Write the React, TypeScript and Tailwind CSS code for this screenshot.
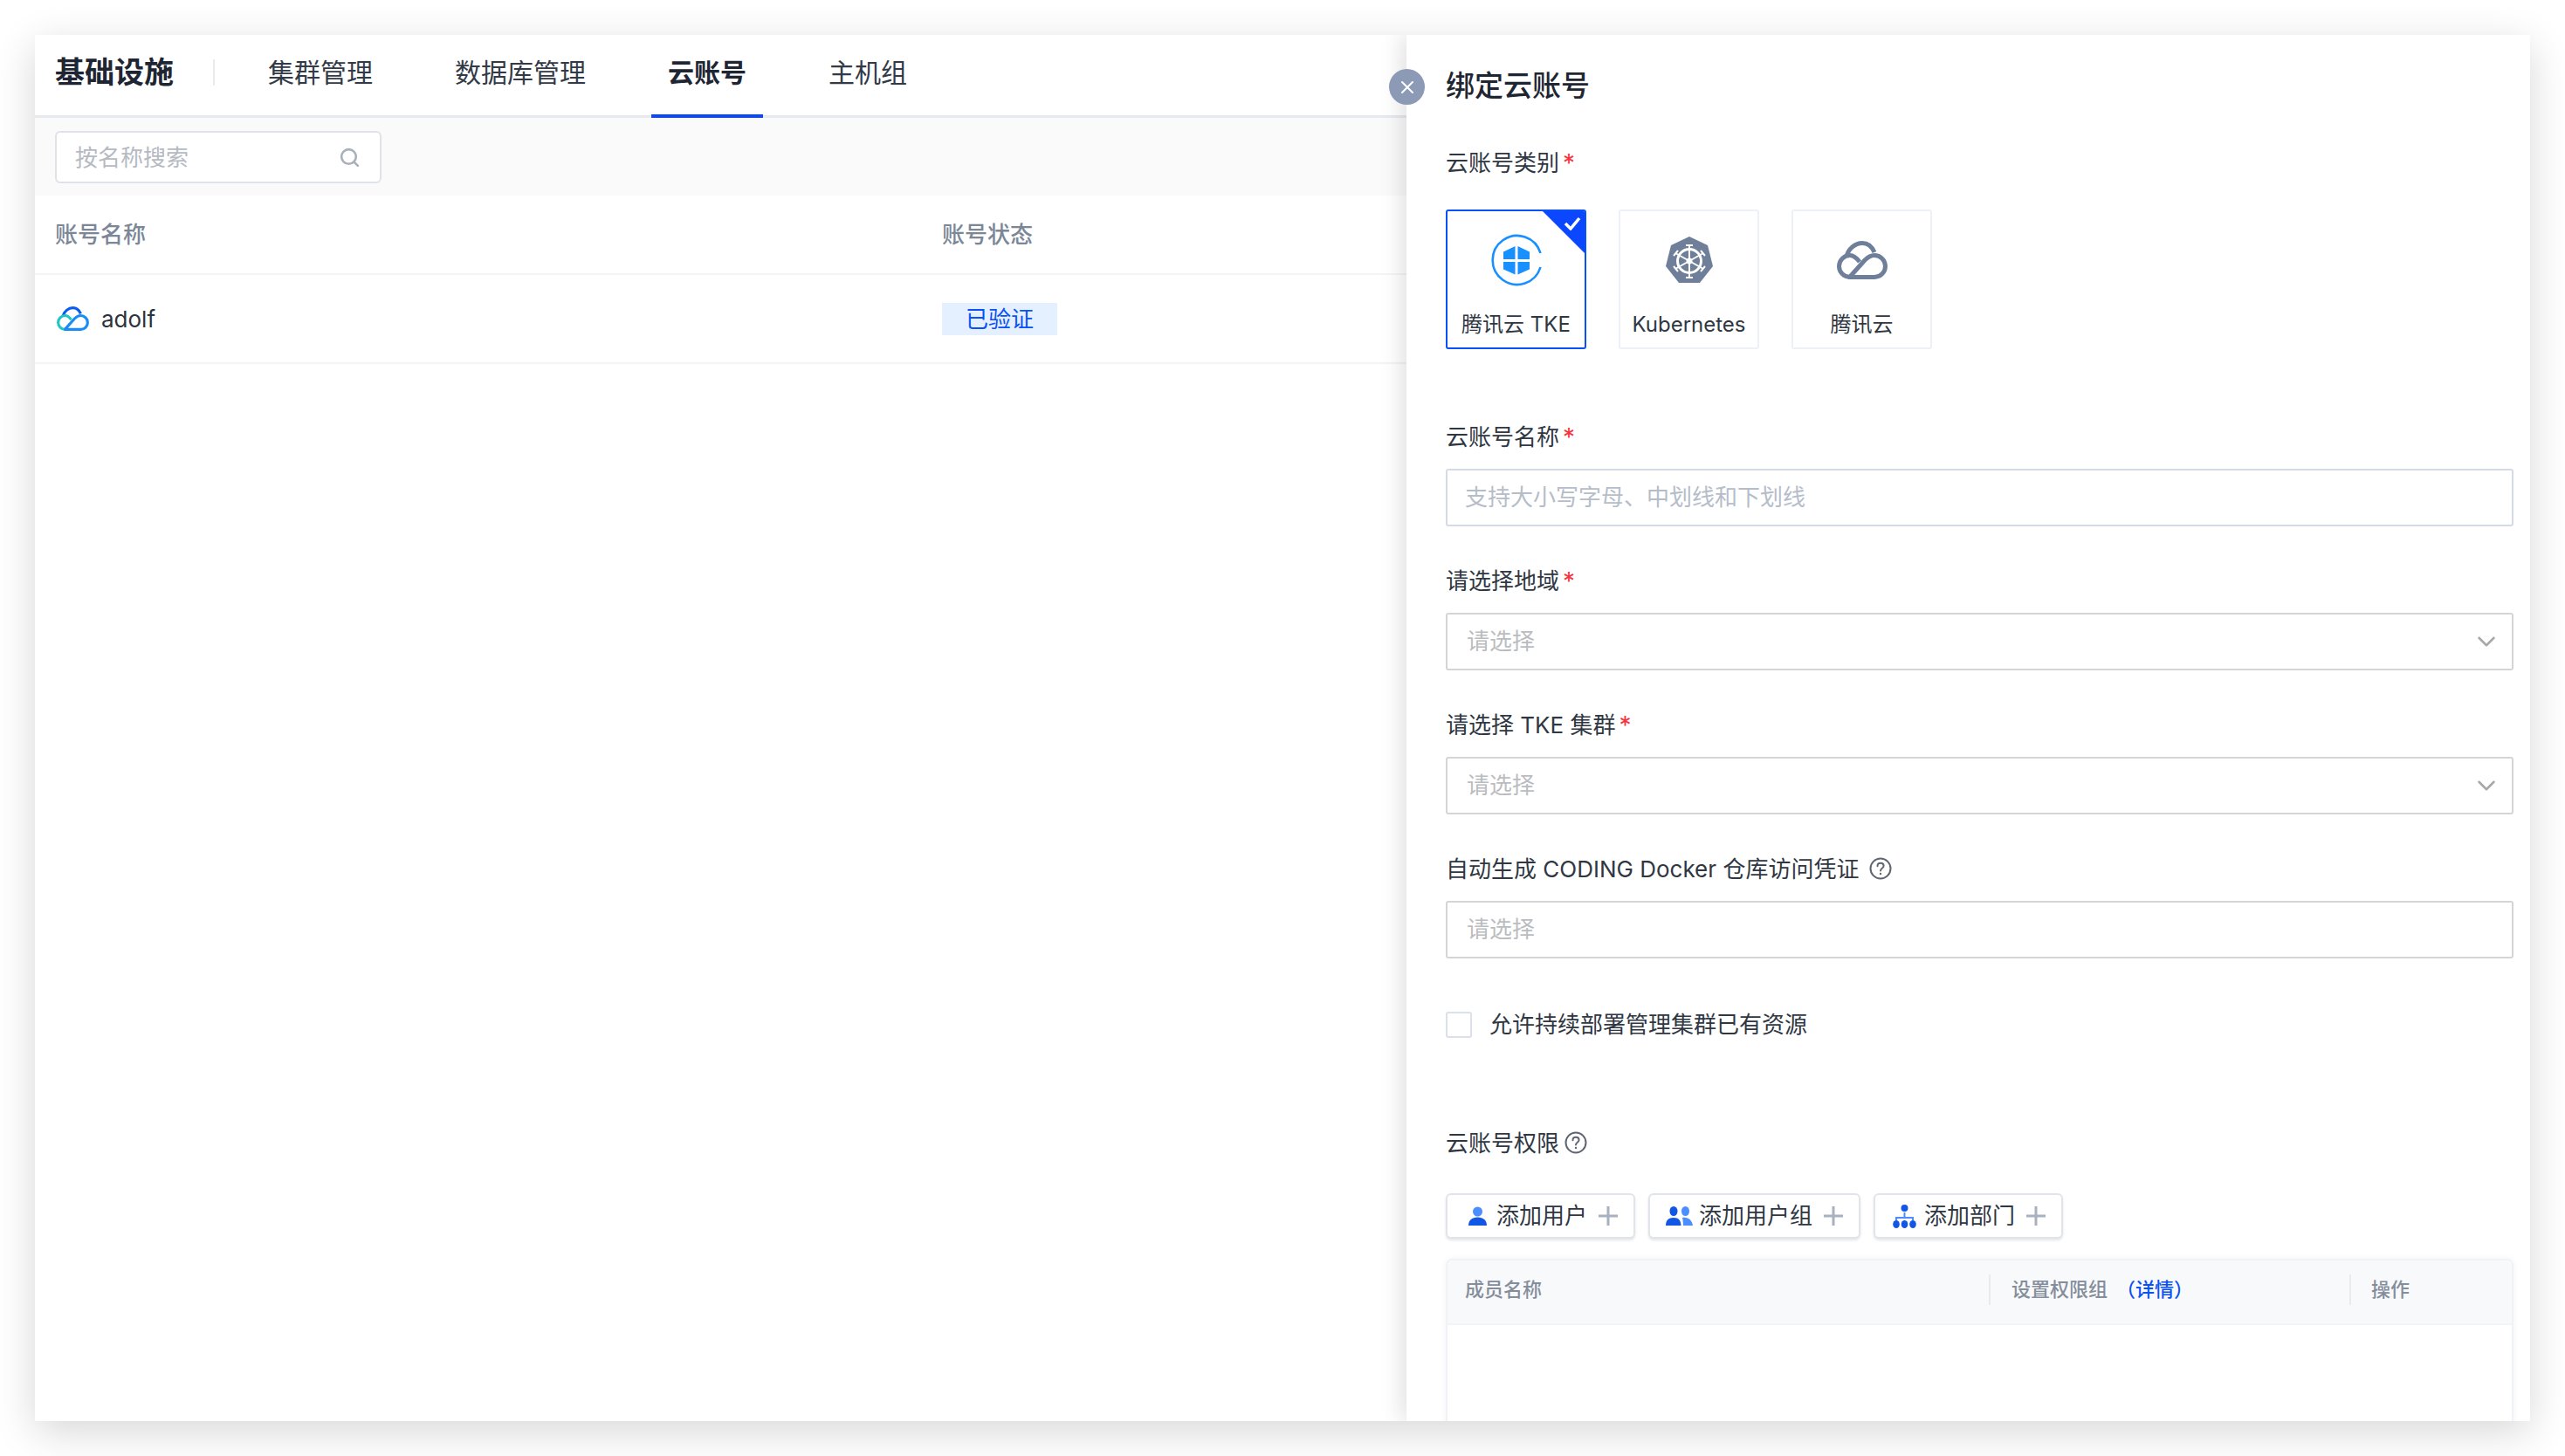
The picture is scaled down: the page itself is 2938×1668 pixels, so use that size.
import { ChevronDown, Search, X } from "lucide-react";

const FONT = "[font-family:Inter,'Noto_Sans_CJK_SC',sans-serif]";

const Help = ({ size = 26 }: { size?: number }) => (
  <svg width={size} height={size} viewBox="0 0 26 26" fill="none" stroke="#5f6672" strokeWidth="2">
    <circle cx="13" cy="13" r="11.5" />
    <path d="M9.5 10.2c0-2 1.6-3.4 3.6-3.4s3.5 1.3 3.5 3.2c0 2.7-3.6 2.7-3.6 5.4" strokeLinecap="round" />
    <circle cx="13" cy="19" r="1.2" fill="#5f6672" stroke="none" />
  </svg>
);

const CloudIcon = ({ a, b, c }: { a: string; b: string; c: string }) => (
  <svg viewBox="0 0 58 44" width="100%" height="100%" fill="none" strokeWidth="5">
    <path d="M11 18C13 9 21 2.500 29 2.500C35 2.500 40 6 43 13" stroke={a} />
    <path d="M26 24C23 20 19.500 16.500 15 16.500A12.500 12.500 0 0 0 15 41.500" stroke={c} />
    <path d="M13 41.500H43A12.500 12.500 0 0 0 43 16.500C38 16.500 35 19 32 22L15 41" stroke={b} />
  </svg>
);

const K8s = () => (
  <svg width="56" height="56" viewBox="0 0 56 56">
    <path d="M28 1l21 10 6 24-15 19H16L1 35l6-24z" fill="#6f7f99" />
    <g stroke="#fff" fill="none" strokeWidth="2.200">
      <circle cx="28" cy="29" r="13.500" strokeWidth="3" />
      <path d="M28 10v38M12 20l32 18M44 20L12 38" strokeWidth="2" />
      <path d="M24 11h8M10 23l5-6M46 23l-5-6M10 35l5 6M46 35l-5 6M24 48h8" strokeWidth="2" />
    </g>
    <circle cx="28" cy="29" r="3.500" fill="#fff" />
  </svg>
);

const TkeIcon = () => (
  <svg width="60" height="60" viewBox="0 0 60 60" fill="none">
    <path d="M57.500 22A28 28 0 1 0 57.500 38" stroke="#1890ff" strokeWidth="2.600" />
    <path d="M28.500 14v15H15V20.500zM31.500 14l13.500 6.500V29H31.500zM15 32h13.500v14.500L15 40.500zM31.500 32H45v8.500l-13.500 6z" fill="#1890ff" />
  </svg>
);

const UserIcon = () => (
  <svg width="21" height="22" viewBox="0 0 21 22">
    <circle cx="10.500" cy="6" r="5.500" fill="#4c8dff" />
    <path d="M0 22C0 16 4 12.500 10.500 12.500S21 16 21 22z" fill="#1256e6" />
  </svg>
);

const GroupIcon = () => (
  <svg width="31" height="23" viewBox="0 0 31 23">
    <ellipse cx="9" cy="5.500" rx="4.500" ry="5.500" fill="#1256e6" />
    <ellipse cx="22.500" cy="5.500" rx="4.500" ry="5.500" fill="#4c8dff" />
    <path d="M0 22c0-6 3-9 9-9s8 3 8.500 9z" fill="#1256e6" />
    <path d="M19 13c7-1 11 3 12 9H20c0-4-.5-6-1-9z" fill="#4c8dff" />
  </svg>
);

const DeptIcon = () => (
  <svg width="27" height="27" viewBox="0 0 27 27">
    <circle cx="13.500" cy="4" r="4" fill="#1256e6" />
    <path d="M13.500 9v6M4 18v-3h19v3" stroke="#4c8dff" strokeWidth="2" fill="none" />
    <ellipse cx="4" cy="22.500" rx="3.800" ry="4.500" fill="#1256e6" />
    <ellipse cx="13.500" cy="22.500" rx="3.800" ry="4.500" fill="#1256e6" />
    <ellipse cx="23" cy="22.500" rx="3.800" ry="4.500" fill="#1256e6" />
  </svg>
);

const Plus = () => (
  <svg width="22" height="22" viewBox="0 0 22 22">
    <path d="M11 0v22M0 11h22" stroke="#a8b1bf" strokeWidth="3" />
  </svg>
);

const Label = ({ text, required }: { text: string; required?: boolean }) => (
  <div className="flex items-center h-[36px] pt-[2px] text-[26px] leading-[34px] text-[#2f3743]">
    <span>{text}</span>
    {required && <span className="ml-[4px] text-[28px] text-[#f5343f]">*</span>}
  </div>
);

const TypeCard = ({
  label,
  active,
  children,
}: {
  label: string;
  active?: boolean;
  children: React.ReactNode;
}) => (
  <div
    className={`relative w-[161px] h-[160px] rounded-[3px] flex flex-col items-center pt-[26px] overflow-hidden border-2 ${
      active ? "border-[#0a51f5]" : "border-[#edf0f5]"
    }`}
  >
    <div className="h-[60px] flex items-center justify-center">{children}</div>
    <span className="mt-[27px] text-[24px] leading-[34px] text-[#2f3743] whitespace-nowrap">{label}</span>
    {active && (
      <div className="absolute top-0 right-0 w-0 h-0 border-t-[48px] border-l-[48px] border-t-[#0a47ff] border-l-transparent" />
    )}
    {active && (
      <svg className="absolute top-[6px] right-[4px]" width="20" height="16" viewBox="0 0 20 16">
        <path d="M2 8l6 6L18 2" stroke="#fff" strokeWidth="3.500" fill="none" />
      </svg>
    )}
  </div>
);

const Field = ({
  placeholder,
  select,
  blue,
}: {
  placeholder: string;
  select?: boolean;
  blue?: boolean;
}) => (
  <div
    className={`mt-[19px] h-[66px] border-2 rounded-[3px] flex items-center justify-between pr-[12px] bg-white ${
      blue ? "border-[#d5dbe6] pl-[20px]" : "border-[#d4d5d7] pl-[22px]"
    }`}
  >
    <span className={`text-[26px] leading-[36px] ${blue ? "text-[#b5bdc9]" : "text-[#bbbcbf]"}`}>{placeholder}</span>
    {select && <ChevronDown size={34} color="#a8a8a8" strokeWidth={1.800} />}
  </div>
);

const AddButton = ({
  icon,
  text,
  box,
  iconGap,
}: {
  icon: React.ReactNode;
  text: string;
  box: string;
  iconGap: string;
}) => (
  <button
    className={`${box} h-[52px] border-2 border-[#e1e4e9] rounded-[6px] shadow-[0_2px_3px_rgba(30,50,90,0.12)] bg-white flex items-center text-[26px] leading-[36px] text-[#2f3743]`}
  >
    <span className={`flex ${iconGap}`}>{icon}</span>
    <span className="whitespace-nowrap mr-[13px]">{text}</span>
    <Plus />
  </button>
);

export default function App() {
  const tabs = ["集群管理", "数据库管理", "云账号", "主机组"];

  return (
    <div className={`w-[2938px] h-[1668px] bg-white p-[40px] overflow-hidden ${FONT}`}>
      <div className="w-full h-full flex bg-white overflow-hidden shadow-[0_12px_44px_rgba(0,0,0,0.16)]">
        {/* LIST */}
        <div className="w-[1571px] shrink-0">
          <div className="h-[95px] flex items-center pl-[23px] border-b-[3px] border-[#e6e9ee]">
            <span className="pb-[6px] text-[34px] font-bold text-[#1f2633] leading-[46px]">基础设施</span>
            <div className="w-[2px] h-[30px] mb-[6px] bg-[#e8eaee] ml-[45px] mr-[42px]" />
            <div className="flex gap-[56px] self-stretch">
              {tabs.map((tab) => (
                <div
                  key={tab}
                  className={`relative px-[19px] pb-[6px] flex items-center text-[30px] leading-[42px] ${
                    tab === "云账号" ? "font-semibold text-[#1f2633]" : "text-[#323a47]"
                  }`}
                >
                  {tab}
                  {tab === "云账号" && (
                    <div className="absolute left-0 right-0 bottom-[-3px] h-[4px] bg-[#0a47ff]" />
                  )}
                </div>
              ))}
            </div>
          </div>

          <div className="h-[89px] bg-[#fafafb] pl-[23px] pt-[15px]">
            <div className="w-[374px] h-[60px] bg-white border-2 border-[#dfe2e7] rounded-[6px] flex items-center justify-between pl-[21px] pr-[22px]">
              <span className="pt-[2px] text-[26px] leading-[34px] text-[#b5bac2]">按名称搜索</span>
              <Search size={25} color="#a9b0bb" strokeWidth={2.500} />
            </div>
          </div>

          <div className="h-[91px] flex items-center border-b-2 border-[#f2f4f7] text-[26px] leading-[36px] font-medium text-[#7b8797]">
            <span className="w-[1039px] pl-[23px]">账号名称</span>
            <span>账号状态</span>
          </div>

          <div className="h-[102px] flex items-center border-b-2 border-[#f2f4f7]">
            <div className="w-[1039px] pl-[25px] flex items-center">
              <div className="w-[37px] h-[28px]">
                <CloudIcon a="#0a5cf0" b="#1a8cf5" c="#23c4c4" />
              </div>
              <span className="ml-[14px] pt-[2px] text-[26px] leading-[36px] text-[#2b3340]">adolf</span>
            </div>
            <span className="w-[132px] h-[37px] bg-[#e4f0ff] text-[#0a51f5] text-[26px] leading-[37px] text-center">
              已验证
            </span>
          </div>
        </div>

        {/* BIND PANEL */}
        <div className="relative w-[1287px] shrink-0 bg-white pl-[45px] pr-[19px] shadow-[-6px_0_24px_rgba(0,0,0,0.12)]">
          <div className="absolute left-[-20px] top-[39px] w-[41px] h-[41px] rounded-full bg-[#8c9ab5] flex items-center justify-center">
            <X size={24} color="#fff" strokeWidth={2} />
          </div>

          <div className="pt-[36px] text-[33px] leading-[44px] font-medium text-[#1f2633]">绑定云账号</div>

          <div className="mt-[48px]">
            <Label text="云账号类别" required />
          </div>
          <div className="mt-[36px] flex gap-[37px]">
            <TypeCard label="腾讯云 TKE" active>
              <TkeIcon />
            </TypeCard>
            <TypeCard label="Kubernetes">
              <K8s />
            </TypeCard>
            <TypeCard label="腾讯云">
              <div className="w-[58px] h-[44px]">
                <CloudIcon a="#6f7f99" b="#6f7f99" c="#6f7f99" />
              </div>
            </TypeCard>
          </div>

          <div className="mt-[82px]">
            <Label text="云账号名称" required />
            <Field placeholder="支持大小写字母、中划线和下划线" blue />
          </div>
          <div className="mt-[44px]">
            <Label text="请选择地域" required />
            <Field placeholder="请选择" select />
          </div>
          <div className="mt-[44px]">
            <Label text="请选择 TKE 集群" required />
            <Field placeholder="请选择" select />
          </div>
          <div className="mt-[44px]">
            <div className="flex items-center gap-[12px]">
              <Label text="自动生成 CODING Docker 仓库访问凭证" />
              <Help />
            </div>
            <Field placeholder="请选择" />
          </div>

          <div className="mt-[58px] flex items-center">
            <div className="w-[30px] h-[30px] border-2 border-[#dce1e9] rounded-[3px]" />
            <span className="ml-[20px] text-[26px] leading-[36px] text-[#2f3743]">允许持续部署管理集群已有资源</span>
          </div>

          <div className="mt-[99px] flex items-center gap-[6px]">
            <Label text="云账号权限" />
            <Help />
          </div>

          <div className="mt-[40px] flex gap-[15px]">
            <AddButton icon={<UserIcon />} text="添加用户" box="w-[217px] pl-[24px]" iconGap="mr-[11px]" />
            <AddButton icon={<GroupIcon />} text="添加用户组" box="w-[243px] pl-[18px]" iconGap="mr-[7px]" />
            <AddButton icon={<DeptIcon />} text="添加部门" box="w-[217px] pl-[20px]" iconGap="mr-[9px]" />
          </div>

          <div className="mt-[23px] h-[260px] border-2 border-[#f1f2f5] rounded-t-[8px] shadow-[0_0_6px_rgba(30,50,90,0.06)]">
            <div className="h-[74px] pb-[6px] bg-[#f8f9fb] rounded-t-[8px] flex items-center text-[22px] leading-[30px] font-medium text-[#848d9b] border-b-2 border-[#f2f4f8]">
              <span className="w-[620px] pl-[20px]">成员名称</span>
              <div className="w-[2px] h-[35px] bg-[#e8eaee]" />
              <span className="w-[411px] pl-[24px]">
                设置权限组
                <span className="ml-[10px] text-[#0a51f5]">（详情）</span>
              </span>
              <div className="w-[2px] h-[35px] bg-[#e8eaee]" />
              <span className="pl-[23px]">操作</span>
            </div>
          </div>
        </div>
      </div>
    </div>
  );
}
